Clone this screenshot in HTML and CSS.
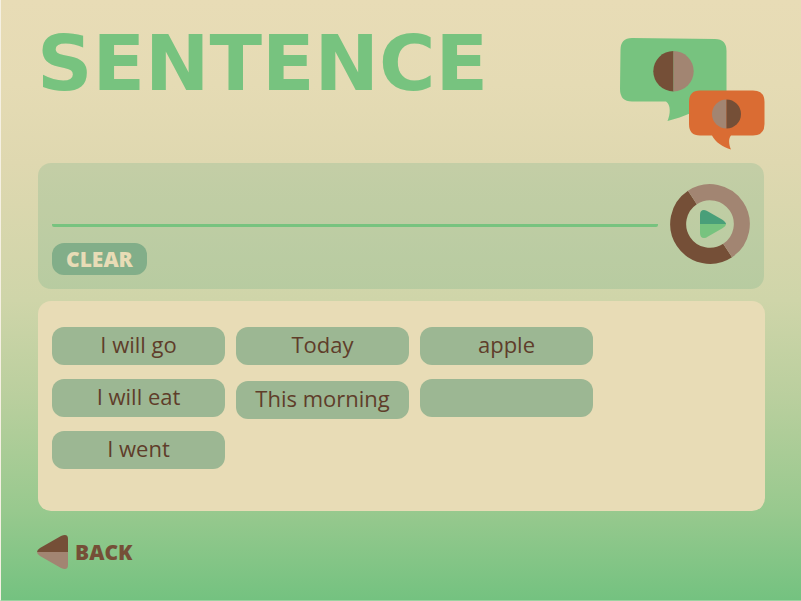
FILE: index.html
```html
<!DOCTYPE html>
<html lang="en">
<head>
<meta charset="utf-8">
<meta name="viewport" content="width=device-width, initial-scale=1">
<title>Sentence</title>
<link rel="stylesheet" href="styles.css">
</head>
<body>
<main class="page">
  <header class="header">
    <h1 class="title">SENTENCE</h1>
    <svg class="bubbles" width="145" height="114" viewBox="0 0 145 114" aria-hidden="true">
      <path fill="#77c37f" d="M12 0L95 1Q106.500 1 106.500 13V63H88C80 72 64 79 47.500 83C50.500 76 51 67 46 63.500H12Q0 63.500 0 51L.5 12Q.5 0 12 0Z"/>
      <path fill="#77c37f" d="M60 60H90V66L69 76Z"/>
      <path fill="#754f37" d="M53.500 13a20.200 20.200 0 0 0 0 40.400z"/>
      <path fill="#a28572" d="M53.500 13a20.200 20.200 0 0 1 0 40.400z"/>
      <path fill="#da6c33" d="M80 52.500H133Q144.500 52.500 144.500 64V86Q144.500 97.500 133 97.500H111C108 101 109 107 111 111.500C103 109 95 104 92 97.500H80Q69 97.500 69 86V64Q69 52.500 80 52.500Z"/>
      <path fill="#a28572" d="M106.500 61.500a14.500 14.500 0 0 0 0 29z"/>
      <path fill="#754f37" d="M106.500 61.500a14.500 14.500 0 0 1 0 29z"/>
    </svg>
  </header>

  <section class="builder" aria-label="Your sentence">
    <div class="composer">
      <output class="line" aria-label="Sentence"></output>
      <button class="clear" type="button">CLEAR</button>
    </div>
    <button class="play" type="button" aria-label="Play">
      <svg width="80" height="80" viewBox="0 0 80 80" aria-hidden="true">
        <path fill="none" stroke="#754f37" stroke-width="16" d="M22.400 13.500A31.700 31.700 0 1 0 57.600 66.500"/>
        <path fill="none" stroke="#a28572" stroke-width="16" d="M22.400 13.500A31.700 31.700 0 0 1 57.600 66.500"/>
        <path fill="#499f79" d="M30 40V31Q30 26 34 26Q36 26 38 27.500L52 35.500Q56 38 56 40Z"/>
        <path fill="#77c37f" d="M30 40V49Q30 54 34 54Q36 54 38 52.500L52 44.500Q56 42 56 40Z"/>
      </svg>
    </button>
  </section>

  <section class="words" aria-label="Words">
    <div class="column">
      <button class="word" type="button">I will go</button>
      <button class="word" type="button">I will eat</button>
      <button class="word" type="button">I went</button>
    </div>
    <div class="column column-time">
      <button class="word" type="button">Today</button>
      <button class="word" type="button">This morning</button>
    </div>
    <div class="column">
      <button class="word" type="button">apple</button>
      <button class="word" type="button" aria-label="Empty"></button>
    </div>
  </section>

  <a class="back" href="#">
    <svg width="32" height="36" viewBox="0 0 32 36" aria-hidden="true">
      <path fill="#754f37" d="M0 18Q0 16 3 14L24 2Q31-1 31 5V18Z"/>
      <path fill="#a28572" d="M0 18Q0 20 3 22L24 34Q31 37 31 31V18Z"/>
    </svg>
    BACK
  </a>
</main>
</body>
</html>
```
FILE: styles.css
```css
* {
  box-sizing: border-box;
}

body {
  margin: 0;
  color: #5f3d2a;
  font-family: "Open Sans", "Noto Sans", sans-serif;
}

.page {
  display: flex;
  flex-direction: column;
  align-items: stretch;
  min-height: 100vh;
  padding: 36px 36px 28px;
  border-left: 1px solid #f5f0e2;
  border-bottom: 1px solid #9bd3a0;
  background: linear-gradient(#e8dcb6 0%, #e5dbb4 14%, #dfd8b0 27%, #cfd5a9 50%, #bacf9e 66%, #98c98e 85%, #74c280 100%);
}

.header {
  display: flex;
  justify-content: space-between;
  height: 127px;
}

.title {
  margin: 0;
  color: #77c37f;
  font-family: "DejaVu Sans", sans-serif;
  font-size: 77px;
  font-weight: 700;
  line-height: 56px;
}

.bubbles {
  flex: none;
  margin-top: 2px;
}

.builder {
  display: flex;
  align-items: center;
  gap: 12px;
  margin: 0 1px;
  padding: 14px;
  border-radius: 13px;
  background: rgba(74, 159, 122, 0.18);
}

.composer {
  flex: 1;
}

.line {
  display: block;
  height: 50px;
  border-bottom: 3px solid #77c37f;
  border-radius: 2px;
  font-size: 22px;
}

.play,
.clear,
.word {
  border: 0;
  padding: 0;
  font-family: inherit;
  cursor: pointer;
}

.play {
  flex: none;
  height: 80px;
  margin-bottom: 4px;
  background: none;
}

.play svg {
  display: block;
}

.clear {
  display: block;
  margin-top: 16px;
  padding: 0 14px;
  border-radius: 12px;
  background: #82ae89;
  color: #e8dcb6;
  font-size: 21px;
  font-weight: 800;
  line-height: 32px;
}

.words {
  display: flex;
  gap: 11px;
  min-height: 210px;
  margin: 12px 0 0 1px;
  padding: 26px 14px;
  border-radius: 13px;
  background: #e8dcb6;
}

.column {
  display: flex;
  flex: 0 1 173px;
  flex-direction: column;
  gap: 14px;
}

.column-time {
  gap: 16px;
}

.word {
  height: 38px;
  padding-bottom: 5px;
  border-radius: 12px;
  background: #9cb793;
  color: #5f3d2a;
  font-size: 22px;
  font-weight: 500;
}

.back {
  display: flex;
  align-items: center;
  align-self: flex-start;
  gap: 6px;
  margin-top: 23px;
  color: #754f37;
  font-size: 21px;
  font-weight: 800;
  text-decoration: none;
}
```
